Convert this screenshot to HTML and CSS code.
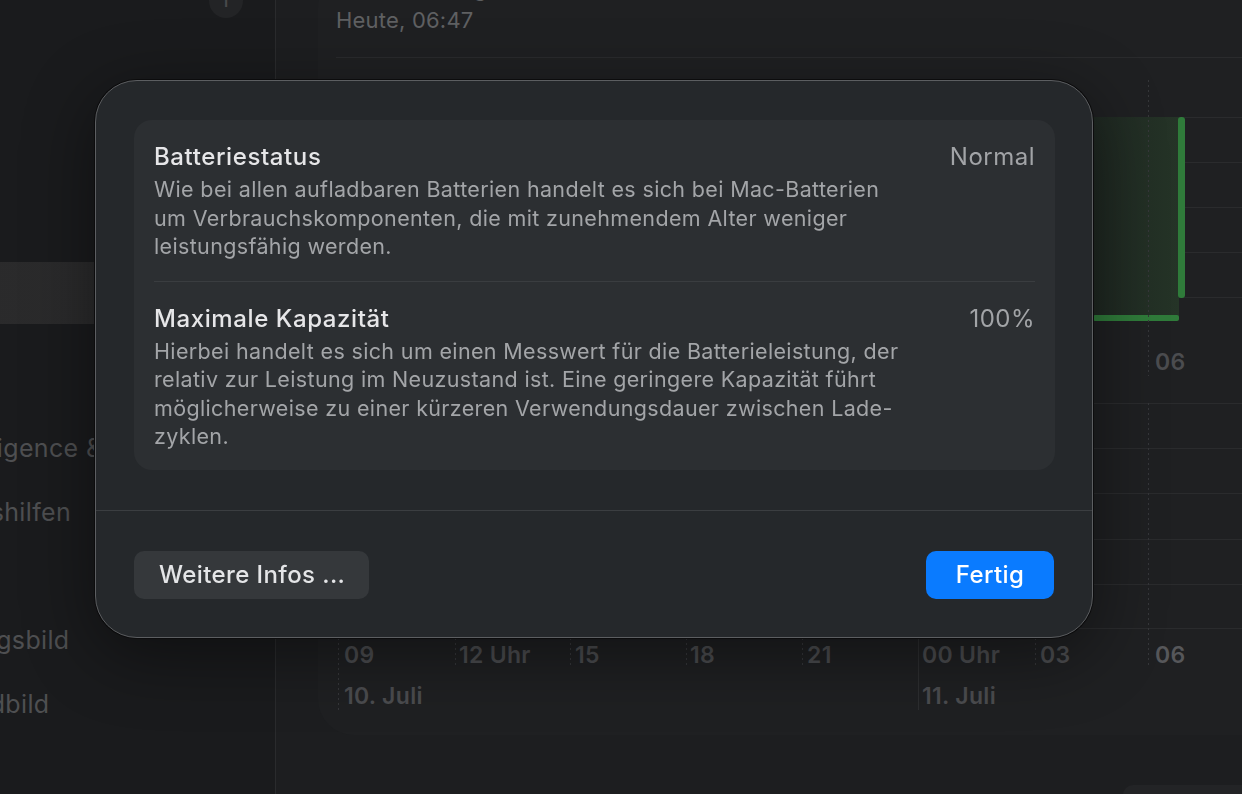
FILE: index.html
```html
<!DOCTYPE html>
<html lang="de">
<head>
<meta charset="utf-8">
<title>Batterie</title>
<link rel="stylesheet" href="styles.css">
</head>
<body>
<div class="window">
  <aside class="sidebar">
    <div class="sidebar-top"><span class="info-btn">i</span></div>
    <ul class="nav">
      <li class="nav-item is-selected"><span class="nav-icon"></span><span class="nav-label">Batterie</span></li>
      <li class="nav-item"><span class="nav-icon"></span><span class="nav-label">Allgemein</span></li>
      <li class="nav-item"><span class="nav-icon"></span><span class="nav-label">Apple Intelligence &amp; Siri</span></li>
      <li class="nav-item"><span class="nav-icon"></span><span class="nav-label">Bedienungshilfen</span></li>
      <li class="nav-item"><span class="nav-icon"></span><span class="nav-label">Displays</span></li>
      <li class="nav-item"><span class="nav-icon"></span><span class="nav-label">Erscheinungsbild</span></li>
      <li class="nav-item"><span class="nav-icon"></span><span class="nav-label">Hintergrundbild</span></li>
    </ul>
  </aside>

  <main class="content">
    <section class="card">
      <header class="card-head">
        <h2 class="card-title">Letzte Ladung auf 100 %</h2>
        <p class="card-sub">Heute, 06:47</p>
      </header>
      <svg class="chart" width="924" height="697" viewBox="318 38 924 697">
        <g class="grid">
          <line x1="336" y1="57.5" x2="1242" y2="57.5"/>
          <line x1="336" y1="117.5" x2="1242" y2="117.5"/>
          <line x1="336" y1="162.5" x2="1242" y2="162.5"/>
          <line x1="336" y1="207.5" x2="1242" y2="207.5"/>
          <line x1="336" y1="252.5" x2="1242" y2="252.5"/>
          <line x1="336" y1="297.5" x2="1242" y2="297.5"/>
          <line x1="336" y1="403.5" x2="1242" y2="403.5"/>
          <line x1="336" y1="448.5" x2="1242" y2="448.5"/>
          <line x1="336" y1="493.5" x2="1242" y2="493.5"/>
          <line x1="336" y1="539.5" x2="1242" y2="539.5"/>
          <line x1="336" y1="584.5" x2="1242" y2="584.5"/>
          <line x1="336" y1="628.5" x2="1242" y2="628.5"/>
        </g>

        <!-- battery level (upper chart) -->
        <defs>
          <linearGradient id="levelFill" x1="0" y1="0" x2="1" y2="0">
            <stop offset="0" stop-color="#1f2822"/>
            <stop offset="1" stop-color="#253427"/>
          </linearGradient>
        </defs>
        <rect x="1093" y="117" width="86" height="203" fill="url(#levelFill)"/>
        <rect x="1093" y="315" width="86" height="6" rx="2" class="level"/>
        <rect x="1178" y="117" width="7" height="181" rx="3" class="level"/>

        <g class="ticks">
          <line x1="338.5" y1="117" x2="338.5" y2="376"/>
          <line x1="455.5" y1="117" x2="455.5" y2="376"/>
          <line x1="570.5" y1="117" x2="570.5" y2="376"/>
          <line x1="686.5" y1="117" x2="686.5" y2="376"/>
          <line x1="802.5" y1="117" x2="802.5" y2="376"/>
          <line x1="1035.5" y1="117" x2="1035.5" y2="376"/>
          <line x1="1148.5" y1="80" x2="1148.5" y2="376"/>
          <line x1="455.5" y1="403" x2="455.5" y2="668"/>
          <line x1="570.5" y1="403" x2="570.5" y2="668"/>
          <line x1="686.5" y1="403" x2="686.5" y2="668"/>
          <line x1="802.5" y1="403" x2="802.5" y2="668"/>
          <line x1="1035.5" y1="403" x2="1035.5" y2="668"/>
          <line x1="1148.5" y1="403" x2="1148.5" y2="668"/>
          <line x1="338.5" y1="403" x2="338.5" y2="710"/>
        </g>
        <line class="day" x1="918.5" y1="117" x2="918.5" y2="376"/>
        <line class="day" x1="918.5" y1="403" x2="918.5" y2="710"/>

        <g class="axis">
          <text x="1155" y="370">06</text>
          <text x="344" y="663">09</text>
          <text x="459" y="663">12 Uhr</text>
          <text x="575" y="663">15</text>
          <text x="690" y="663">18</text>
          <text x="807" y="663">21</text>
          <text x="922" y="663">00 Uhr</text>
          <text x="1040" y="663">03</text>
          <text x="1155" y="663" class="now">06</text>
          <text x="344" y="704">10. Juli</text>
          <text x="922" y="704">11. Juli</text>
        </g>
      </svg>
    </section>
    <div class="content-foot"><span class="ghost-btn"></span></div>
  </main>
</div>

<div class="scrim">
  <div class="sheet" role="dialog">
    <div class="sheet-body">
      <div class="group">
        <div class="row">
          <h3 class="row-title">Batteriestatus</h3>
          <span class="row-value">Normal</span>
          <p class="row-desc">Wie bei allen aufladbaren Batterien handelt es sich bei Mac-Batterien<br>um Verbrauchskomponenten, die mit zunehmendem Alter weniger<br>leistungsfähig werden.</p>
        </div>
        <div class="row">
          <h3 class="row-title">Maximale Kapazität</h3>
          <span class="row-value">100%</span>
          <p class="row-desc">Hierbei handelt es sich um einen Messwert für die Batterieleistung, der<br>relativ zur Leistung im Neuzustand ist. Eine geringere Kapazität führt<br>möglicherweise zu einer kürzeren Verwendungsdauer zwischen Lade-<br>zyklen.</p>
        </div>
      </div>
    </div>
    <div class="sheet-foot">
      <button class="btn btn-secondary" type="button">Weitere Infos ...</button>
      <button class="btn btn-primary" type="button">Fertig</button>
    </div>
  </div>
</div>
</body>
</html>
```
FILE: styles.css
```css
* { box-sizing: border-box; }

html, body {
  margin: 0;
  width: 1242px;
  height: 794px;
  overflow: hidden;
  background: #1d1e20;
  font-family: Inter, "Noto Sans", "Liberation Sans", sans-serif;
  -webkit-font-smoothing: antialiased;
}

/* ---------- window (left part runs off screen) ---------- */
.window {
  display: flex;
  height: 794px;
  margin-left: -200px;
}

.sidebar {
  flex: none;
  width: 476px;
  background: #1a1b1d;
  border-right: 1px solid #2a2b2d;
  display: flex;
  flex-direction: column;
}

.sidebar-top {
  display: flex;
  justify-content: flex-end;
  padding-right: 32px;
  margin-top: -16px;
  height: 34px;
}

.info-btn {
  width: 34px;
  height: 34px;
  border-radius: 50%;
  background: #232426;
  color: #48494b;
  font-size: 16px;
  font-weight: 600;
  display: flex;
  align-items: center;
  justify-content: center;
}

.nav {
  list-style: none;
  margin: 0;
  padding: 244px 0 0;
}

.nav-item {
  height: 64px;
  display: flex;
  align-items: center;
  gap: 9px;
  padding-left: 24px;
  font-size: 25px;
  letter-spacing: 0.35px;
  color: #4e4f51;
  white-space: nowrap;
}

.nav-item.is-selected {
  height: 62px;
  margin-bottom: 28px;
  background: linear-gradient(90deg, #29292a, #2c2c2d);
  color: #6a6b6d;
}

.nav-icon {
  width: 28px;
  height: 28px;
  border-radius: 7px;
  background: #2a2b2d;
  flex: none;
}

/* ---------- content pane ---------- */
.content {
  flex: 1;
  min-width: 0;
  padding-left: 42px;
  display: flex;
  flex-direction: column;
}

.card {
  flex: none;
  width: 1000px;
  height: 763px;
  margin-top: -28px;
  background: #1f2022;
  border-radius: 36px;
}

.card-head {
  padding: 3px 0 5px 18px;
}

.card-title {
  margin: 0;
  font-size: 22px;
  line-height: 26px;
  font-weight: 600;
  color: #5d5e60;
}

.card-sub {
  margin: 6px 0 0;
  font-size: 22px;
  line-height: 26px;
  letter-spacing: 0.2px;
  color: #5f6062;
}

.chart { display: block; }

.grid line { stroke: #2a2b2d; stroke-width: 1; }
.ticks line { stroke: #36373a; stroke-width: 1; stroke-dasharray: 2 3; }
.day { stroke: #2d2e30; stroke-width: 1; }
.level { fill: #2f7b3a; }

.axis text {
  font-family: Inter, "Noto Sans", sans-serif;
  font-size: 23px;
  font-weight: 600;
  letter-spacing: 0.3px;
  fill: #4b4c4f;
}

.axis .now { fill: #56575a; }

.content-foot {
  width: 1000px;
  margin-top: 50px;
  display: flex;
  justify-content: flex-end;
}

.ghost-btn {
  width: 195px;
  height: 40px;
  border-radius: 10px;
  background: #232426;
}

/* ---------- modal sheet ---------- */
.scrim {
  position: fixed;
  inset: 0;
}

.sheet {
  position: absolute;
  left: 95px;
  top: 80px;
  width: 998px;
  height: 558px;
  background: #25282b;
  border: 1px solid #5c5e61;
  border-radius: 42px;
  box-shadow: 0 0 0 1px #0c0c0d, 0 16px 70px rgba(0, 0, 0, 0.45);
  display: flex;
  flex-direction: column;
  overflow: hidden;
}

.sheet-body {
  padding: 39px 37px 40px 38px;
}

.group {
  background: #2c2f32;
  border-radius: 18px;
  padding: 0 20px;
}

.row {
  display: grid;
  grid-template-columns: 1fr auto;
  padding: 22px 0 20px;
}

.row + .row {
  border-top: 1px solid #3a3d40;
  padding-bottom: 19px;
}

.row-title {
  margin: 0;
  font-size: 24px;
  line-height: 30px;
  font-weight: 500;
  letter-spacing: 0.6px;
  color: #e6e6e8;
}

.row-value {
  font-size: 24px;
  line-height: 30px;
  letter-spacing: 0.5px;
  color: #a2a4a7;
}

.row-desc {
  grid-column: 1 / -1;
  margin: 3px 0 0;
  font-size: 21.5px;
  line-height: 28.5px;
  letter-spacing: 0.35px;
  color: #a3a5a8;
}

.sheet-foot {
  border-top: 1px solid #3b3e41;
  padding: 40px 38px 0 38px;
  display: flex;
  justify-content: space-between;
}

.btn {
  height: 48px;
  border: 0;
  border-radius: 10px;
  font-family: Inter, "Noto Sans", sans-serif;
  font-size: 24px;
  font-weight: 500;
  letter-spacing: 0.4px;
}

.btn-secondary {
  width: 235px;
  padding: 0 0 0 25px;
  text-align: left;
  background: #35383b;
  color: #e4e5e7;
}

.btn-primary {
  width: 128px;
  background: #0a7bff;
  color: #ffffff;
}
```
